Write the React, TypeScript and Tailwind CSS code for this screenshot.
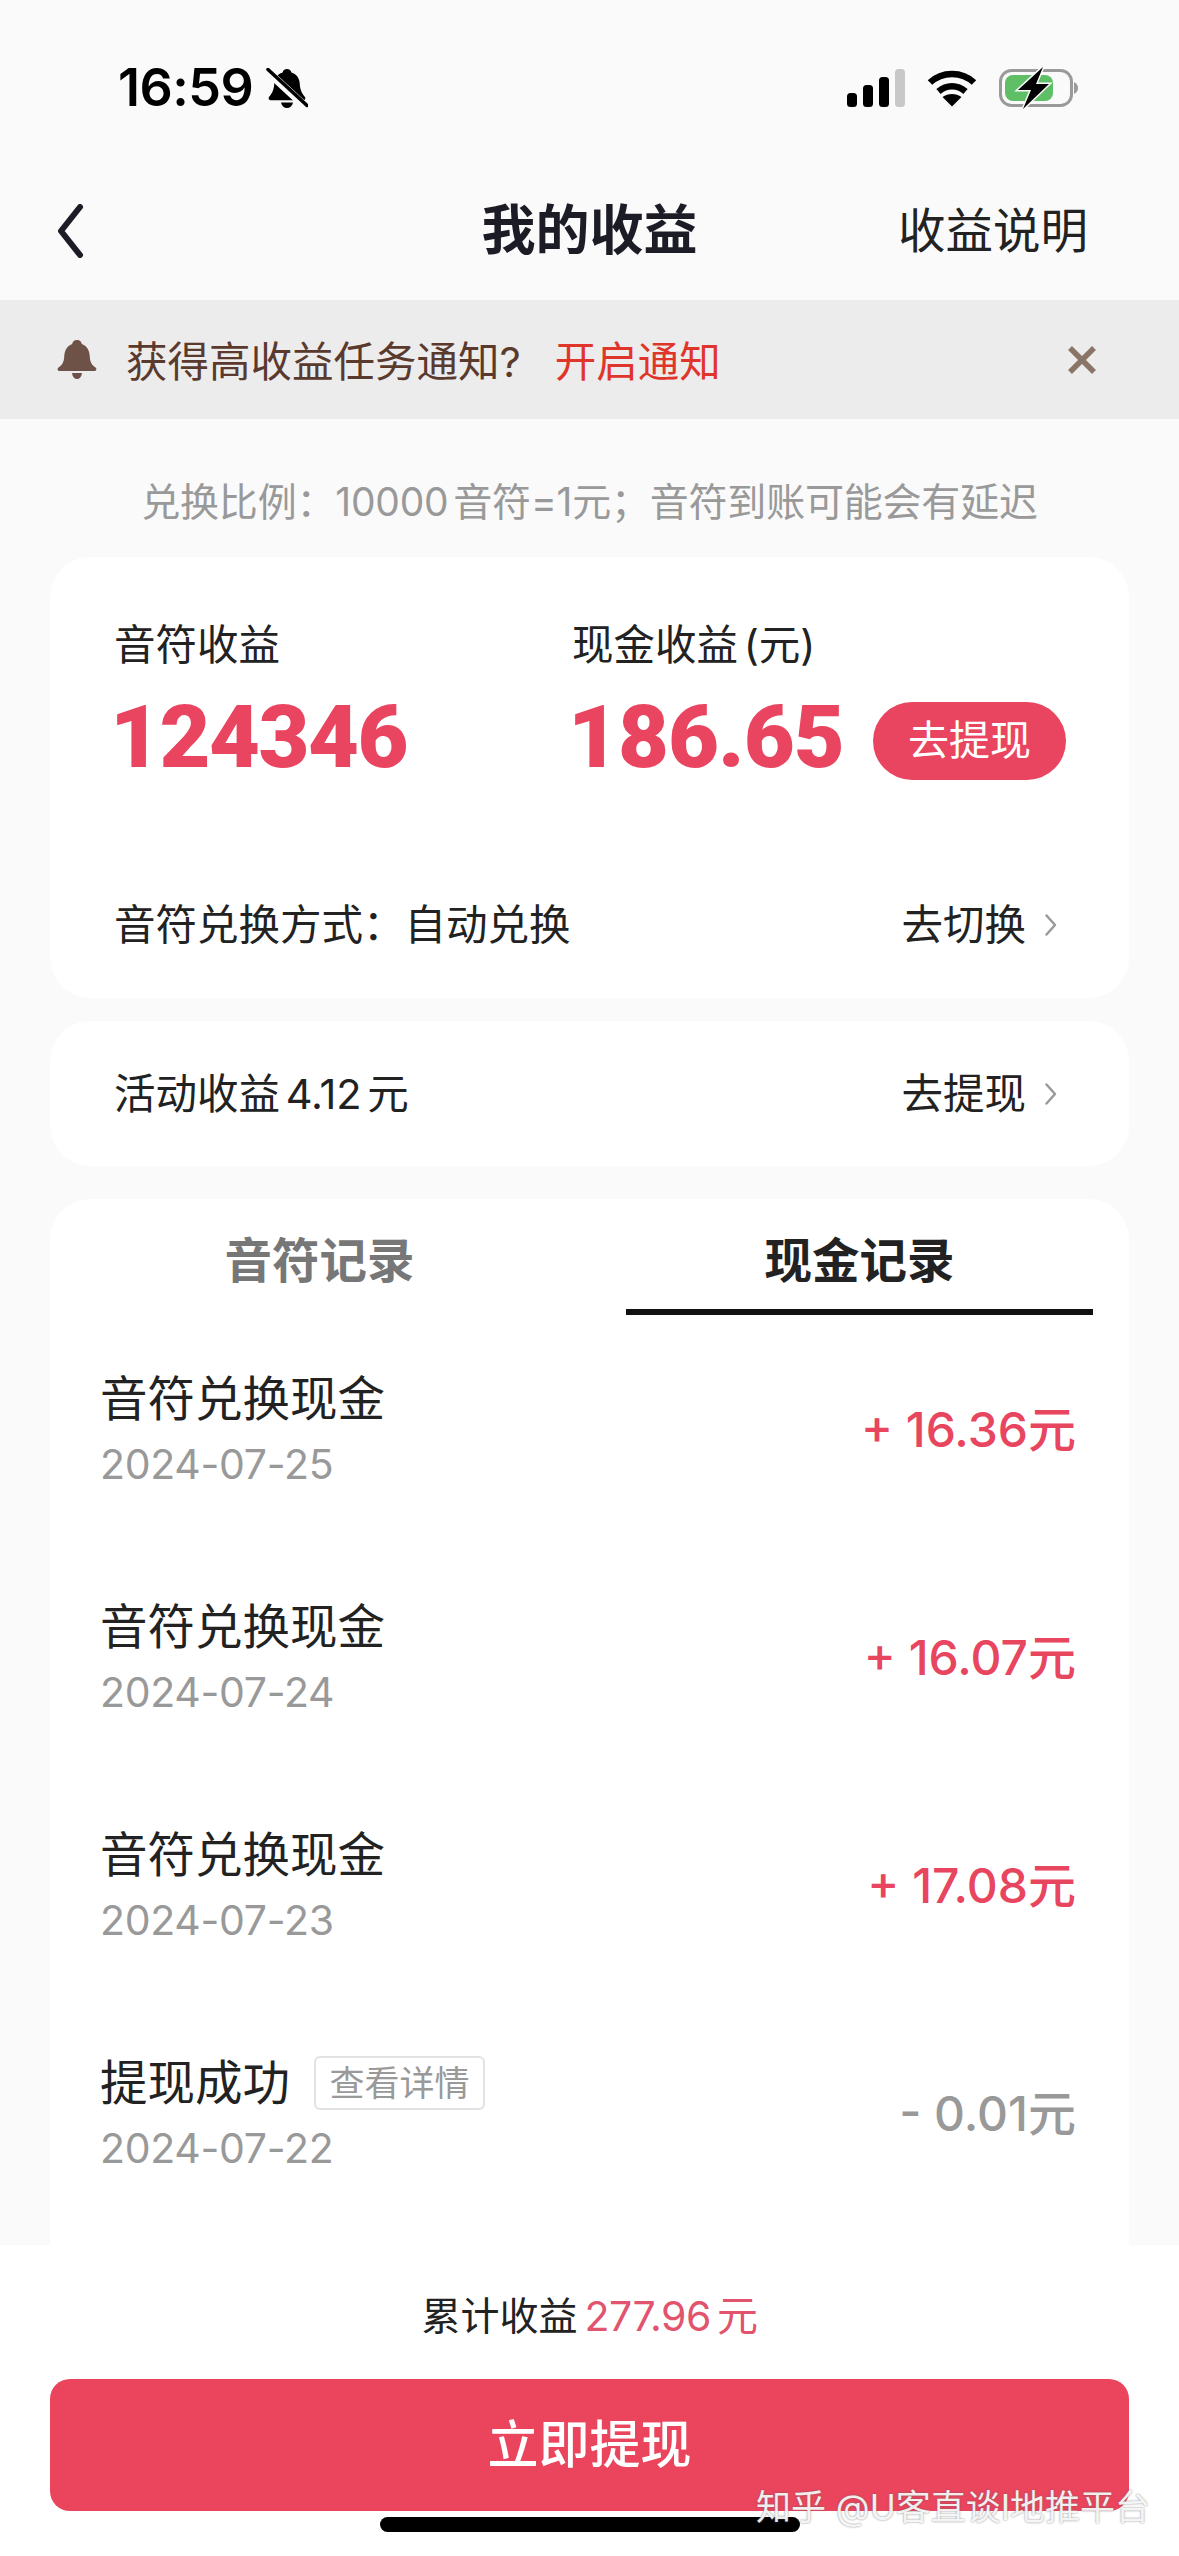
const FONT = 'font-["Inter","Noto_Sans_CJK_SC",sans-serif]'

type Record = {
  title: string
  date: string
  amount: string
  withdrawn?: boolean
}

const records: Record[] = [
  { title: '音符兑换现金', date: '2024-07-25', amount: '+ 16.36元' },
  { title: '音符兑换现金', date: '2024-07-24', amount: '+ 16.07元' },
  { title: '音符兑换现金', date: '2024-07-23', amount: '+ 17.08元' },
  { title: '提现成功', date: '2024-07-22', amount: '- 0.01元', withdrawn: true },
]

function MutedBell() {
  return (
    <svg width="42" height="42" viewBox="0 0 42 42" className="ml-[13px] mt-[1px]">
      <path
        d="M21 1c2.500 0 4 1.600 4.400 3.400C31 6 33.500 10.500 33.800 16c.3 6 2.200 9.500 5.200 13 1 1.400 0 3.200-1.800 3.200H4.800C3 32.200 2 30.400 3 29c3-3.500 4.900-7 5.200-13C8.500 10.500 11 6 16.600 4.400 17 2.600 18.500 1 21 1z"
        fill="#000"
      />
      <path d="M15 34.500h12c-.6 3.500-3 5.500-6 5.500s-5.400-2-6-5.500z" fill="#000" />
      <path d="M2 4l38 35" stroke="#fafafa" strokeWidth="8" />
      <path d="M2 1.500l39 36" stroke="#000" strokeWidth="3.500" strokeLinecap="round" />
    </svg>
  )
}

function SignalIcon() {
  return (
    <svg width="58" height="38" viewBox="0 0 58 38">
      <rect x="0" y="24" width="10" height="14" rx="3.500" fill="#000" />
      <rect x="16" y="16" width="10" height="22" rx="3.500" fill="#000" />
      <rect x="32" y="8" width="10" height="30" rx="3.500" fill="#000" />
      <rect x="48" y="0" width="10" height="38" rx="3.500" fill="#c8c8c8" />
    </svg>
  )
}

function WifiIcon() {
  return (
    <svg width="50" height="38" viewBox="0 0 50 38">
      <path d="M3 13.500C15 2 35 2 47 13.500" stroke="#000" strokeWidth="6.500" fill="none" />
      <path d="M11.500 22.500c8-7 19-7 27 0" stroke="#000" strokeWidth="6.500" fill="none" />
      <path d="M25 37.500L15.500 28c5.500-4 13.500-4 19 0z" fill="#000" />
    </svg>
  )
}

function BatteryIcon() {
  return (
    <svg width="80" height="42" viewBox="0 0 80 42">
      <rect x="1.500" y="3.500" width="71" height="35" rx="11" fill="none" stroke="#9a9a9a" strokeWidth="3" />
      <path d="M75 15c3 1.500 4 3.500 4 6s-1 4.500-4 6z" fill="#9a9a9a" />
      <rect x="6" y="8" width="48" height="26" rx="8" fill="#5fbf66" />
      <path d="M44 0L19 23h13l-8 19 26-25H37z" fill="#000" stroke="#fafafa" strokeWidth="3" paintOrder="stroke" />
    </svg>
  )
}

function StatusBar() {
  return (
    <div className="h-[162px] shrink-0 flex items-start justify-between pt-[64px] pl-[118px] pr-[100px]">
      <div className="flex items-center">
        <span className="font-['Inter'] font-semibold text-[52px] leading-[48px] tracking-[-0.5px] text-black">16:59</span>
        <MutedBell />
      </div>
      <div className="flex items-center gap-[22px] mt-[3px]">
        <SignalIcon />
        <WifiIcon />
        <BatteryIcon />
      </div>
    </div>
  )
}

function NavBar() {
  return (
    <div className="h-[138px] shrink-0 grid grid-cols-[1fr_auto_1fr] items-center">
      <div className="pl-[56px]">
        <svg width="28" height="54" viewBox="0 0 28 54" className="block">
          <path d="M24 3L5 27l19 24" fill="none" stroke="#1c1c26" strokeWidth="6" strokeLinecap="round" strokeLinejoin="round" />
        </svg>
      </div>
      <div className="text-[54px] leading-[60px] font-bold text-[#1c1c26]">我的收益</div>
      <div className="text-right pr-[91px] text-[47.500px] leading-[60px] text-[#222]">收益说明</div>
    </div>
  )
}

function NoticeBar() {
  return (
    <div className="h-[119px] shrink-0 bg-[#ececec] flex items-center pl-[56px] pr-[82px]">
      <svg width="42" height="40" viewBox="0 0 42 40" className="shrink-0">
        <path
          d="M21 0c3 0 4.500 1.800 4.800 4C31.500 6 33.500 11 33.800 17c.3 5 2 8 5.700 10.500 1.500 1 1 3.500-1 3.500h-35c-2 0-2.500-2.500-1-3.500C6.200 25 7.900 22 8.200 17 8.500 11 10.500 6 16.200 4c.3-2.200 1.800-4 4.800-4z"
          fill="#6e5147"
        />
        <path d="M16 33h10c-.5 4-2.500 6-5 6s-4.500-2-5-6z" fill="#6e5147" />
      </svg>
      <span className="ml-[28px] mt-[4px] text-[41.500px] leading-[50px] text-[#5b3a2e]">获得高收益任务通知?</span>
      <span className="ml-[34px] mt-[4px] text-[41.500px] leading-[50px] text-[#e0352b]">开启通知</span>
      <svg width="30" height="30" viewBox="0 0 30 30" className="ml-auto">
        <path d="M3 3l24 24M27 3L3 27" stroke="#8b7568" strokeWidth="5.500" />
      </svg>
    </div>
  )
}

function Chevron() {
  return (
    <svg width="14" height="24" viewBox="0 0 14 24" className="ml-[18px]">
      <path d="M2.500 2.500L11 12l-8.500 9.500" fill="none" stroke="#999" strokeWidth="2.500" strokeLinecap="round" strokeLinejoin="round" />
    </svg>
  )
}

function RowLink({ label }: { label: string }) {
  return (
    <div className="flex items-center">
      <span className="text-[41.500px] leading-[48px] text-[#222]">{label}</span>
      <Chevron />
    </div>
  )
}

function EarningsCard() {
  return (
    <div className="bg-white rounded-[40px] pt-[64px] pb-[49px] pl-[64px] pr-[63px]">
      <div className="flex">
        <div className="w-[458px] shrink-0">
          <div className="text-[41.500px] leading-[48px] text-[#222]">音符收益</div>
          <div className="mt-[23px] -ml-[4px] font-['Roboto'] font-black text-[88px] leading-[90px] tracking-[-1.500px] text-[#ea4560]">124346</div>
        </div>
        <div className="flex-1">
          <div className="text-[41.500px] leading-[48px] text-[#222] [word-spacing:-6px]">现金收益 (元)</div>
          <div className="mt-[23px] -ml-[4px] flex items-center justify-between">
            <span className="font-['Roboto'] font-black text-[88px] leading-[90px] tracking-[-1px] text-[#ea4560]">186.65</span>
            <span className="mt-[8px] w-[193px] h-[78px] rounded-full bg-[#ea4560] flex items-center justify-center text-[41px] text-white">去提现</span>
          </div>
        </div>
      </div>
      <div className="mt-[119px] pr-[8px] flex items-center justify-between">
        <span className="text-[41.500px] leading-[48px] text-[#222]">音符兑换方式：自动兑换</span>
        <RowLink label="去切换" />
      </div>
    </div>
  )
}

function RecordRow({ record }: { record: Record }) {
  return (
    <div className="h-[228px] shrink-0 flex items-center justify-between pt-[2px] pl-[50px] pr-[53px]">
      <div>
        <div className="flex items-center h-[56px]">
          <span className="text-[47.500px] leading-[56px] text-[#222]">{record.title}</span>
          {record.withdrawn && (
            <span className="ml-[24px] w-[171px] h-[54px] border-2 border-[#e2e2e2] rounded-[6px] flex items-center justify-center text-[35px] text-[#999]">
              查看详情
            </span>
          )}
        </div>
        <div className="mt-[12px] text-[41px] leading-[50px] tracking-[-0.3px] text-[#999]">{record.date}</div>
      </div>
      <div className={`text-[48px] leading-[56px] font-medium ${record.withdrawn ? 'text-[#999]' : 'text-[#e8455f]'}`}>
        {record.amount}
      </div>
    </div>
  )
}

function RecordsCard() {
  return (
    <div className="mt-[33px] bg-white rounded-t-[40px] flex-1 overflow-hidden">
      <div className="flex justify-between px-[36px] h-[116px]">
        <div className="w-[467px] pt-[34px] text-center text-[47.500px] leading-[56px] font-bold text-[#777]">音符记录</div>
        <div className="w-[467px] pt-[34px] text-center text-[47.500px] leading-[56px] font-bold text-[#222] border-b-[6px] border-[#111]">现金记录</div>
      </div>
      {records.map((record) => (
        <RecordRow key={record.date} record={record} />
      ))}
    </div>
  )
}

function Footer() {
  return (
    <div className="h-[311px] shrink-0 bg-white px-[50px] flex flex-col items-center">
      <div className="mt-[48px] h-[46px] flex items-center text-[39px] leading-[46px] text-[#222]">
        累计收益
        <span className="ml-[7px] text-[41px] tracking-[-0.5px] [word-spacing:-5px] text-[#e2536d]">277.96 元</span>
      </div>
      <div className="mt-[40px] w-full h-[132px] rounded-[20px] bg-[#ea455d] flex items-center justify-center text-[51px] font-medium text-white">
        立即提现
      </div>
    </div>
  )
}

export default function App() {
  return (
    <div className={`${FONT} relative w-[1179px] h-[2556px] overflow-hidden bg-[#fafafa] flex flex-col`}>
      <StatusBar />
      <NavBar />
      <NoticeBar />
      <div className="h-[138px] shrink-0 pt-[28px] flex items-center justify-center text-[39px] leading-[46px] tracking-[-0.2px] [word-spacing:-6px] text-[#999]">
        兑换比例：10000 音符=1元；音符到账可能会有延迟
      </div>
      <div className="flex-1 min-h-0 px-[50px] flex flex-col overflow-hidden">
        <EarningsCard />
        <div className="mt-[23px] h-[145px] shrink-0 bg-white rounded-[40px] flex items-center justify-between pl-[64px] pr-[71px]">
          <span className="text-[41.500px] leading-[48px] text-[#222] [word-spacing:-6px]">活动收益 4.12 元</span>
          <RowLink label="去提现" />
        </div>
        <RecordsCard />
      </div>
      <Footer />
      {/* home indicator + 知乎 watermark lie over the button */}
      <div className="absolute left-[380px] top-[2517px] w-[420px] h-[15px] rounded-full bg-black" />
      <div className="absolute left-[756px] top-[2484px] text-[35px] leading-[46px] whitespace-nowrap text-white/90 [text-shadow:0_0_2px_rgba(90,90,90,0.8)]">
        知乎 @U客直谈I地推平台
      </div>
    </div>
  )
}
